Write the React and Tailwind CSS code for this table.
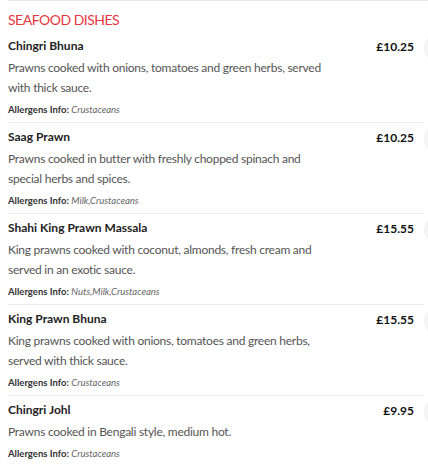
import React from "react";

const items = [
  {
    name: "Chingri Bhuna",
    price: "£10.25",
    desc: ["Prawns cooked with onions, tomatoes and green herbs, served", "with thick sauce."],
    allergens: "Crustaceans",
  },
  {
    name: "Saag Prawn",
    price: "£10.25",
    desc: ["Prawns cooked in butter with freshly chopped spinach and", "special herbs and spices."],
    allergens: "Milk,Crustaceans",
  },
  {
    name: "Shahi King Prawn Massala",
    price: "£15.55",
    desc: ["King prawns cooked with coconut, almonds, fresh cream and", "served in an exotic sauce."],
    allergens: "Nuts,Milk,Crustaceans",
  },
  {
    name: "King Prawn Bhuna",
    price: "£15.55",
    desc: ["King prawns cooked with onions, tomatoes and green herbs,", "served with thick sauce."],
    allergens: "Crustaceans",
  },
  {
    name: "Chingri Johl",
    price: "£9.95",
    desc: ["Prawns cooked in Bengali style, medium hot."],
    allergens: "Crustaceans",
  },
];

function Item({ item, first }) {
  return (
    <div className={first ? "flex w-[416px]" : "flex w-[416px] border-t border-[#ebebeb] pt-[4px]"}>
      <div className="flex-1 pb-[4px] whitespace-nowrap">
        <div className="h-[20px] text-[12px] leading-[20px] font-bold text-[#222]">{item.name}</div>
        <div className="mt-[2px] text-[12px] leading-[20px] tracking-[-0.25px] text-[#555]">
          {item.desc.map((l, i) => (
            <div key={i}>{l}</div>
          ))}
        </div>
        <div className="mt-[4px] text-[9.5px] leading-[16px] text-[#333]">
          <span className="font-bold">Allergens Info:</span>{" "}
          <span className="italic text-[#666]">{item.allergens}</span>
        </div>
      </div>
      <div className="h-[20px] pt-[1px] text-[12px] leading-[20px] font-bold text-[#111]">{item.price}</div>
      <div className="ml-[10px] mr-[-32px] mt-[-4px] h-[32px] w-[32px] shrink-0 rounded-full bg-[#f4f4f4]"></div>
    </div>
  );
}

export default function App() {
  return (
    <div className="w-[428px] h-[467px] overflow-hidden bg-white" style={{ fontFamily: "Lato, 'Noto Sans', sans-serif" }}>
      <div className="ml-[8px] w-[450px] border-t border-[#e8e8e8] pt-[7px]">
        <h2 className="h-[24px] text-[14px] leading-[24px] tracking-[-0.5px] text-[#e5363f] mb-[4px]">SEAFOOD DISHES</h2>
        {items.map((it, i) => (
          <Item key={i} item={it} first={i === 0} />
        ))}
      </div>
    </div>
  );
}
